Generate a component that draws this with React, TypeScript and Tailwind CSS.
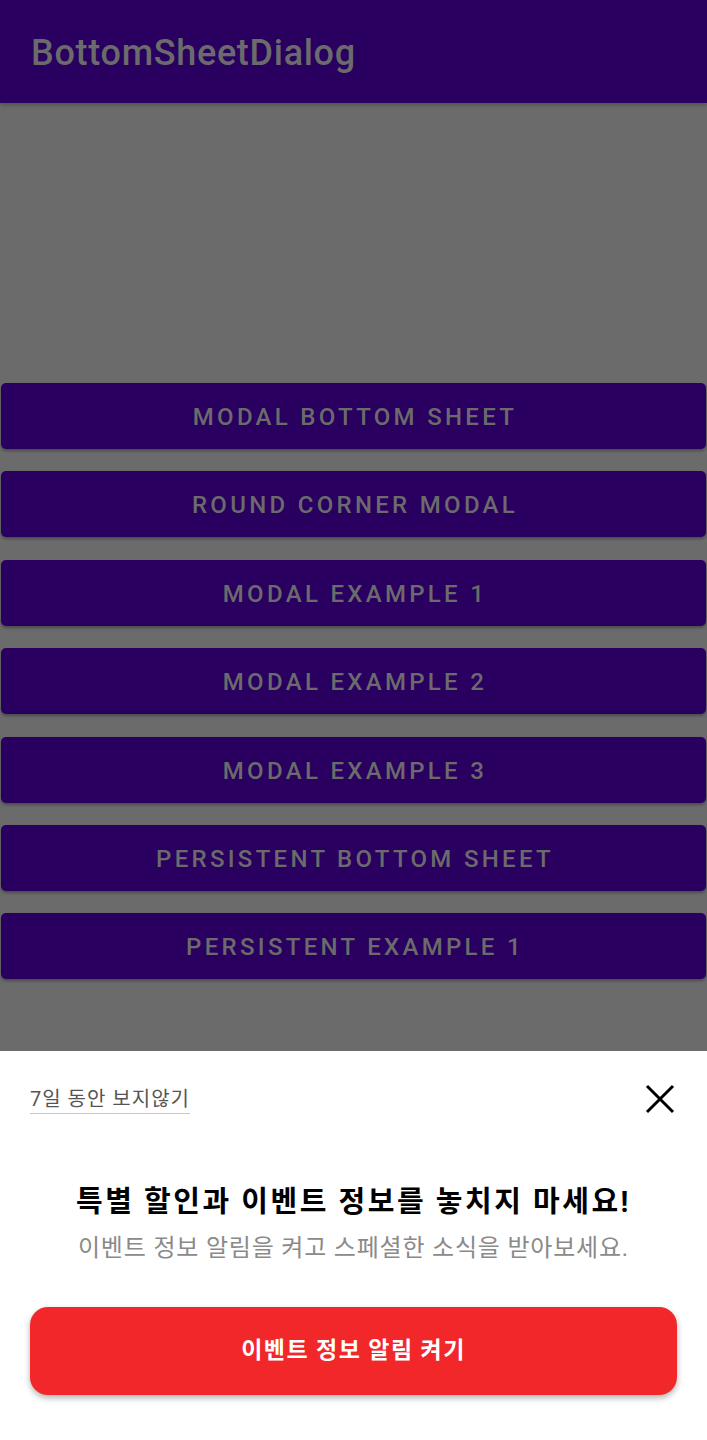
const buttons = [
  'MODAL BOTTOM SHEET',
  'ROUND CORNER MODAL',
  'MODAL EXAMPLE 1',
  'MODAL EXAMPLE 2',
  'MODAL EXAMPLE 3',
  'PERSISTENT BOTTOM SHEET',
  'PERSISTENT EXAMPLE 1',
]

const kr = "font-['Roboto','Noto_Sans_CJK_KR',sans-serif]"

export default function App() {
  return (
    <div className="flex h-[1440px] w-full flex-col overflow-hidden bg-[#6b6b6b] font-['Roboto',sans-serif]">
      <header className="flex h-[103px] shrink-0 items-center bg-[#290060] pl-[31px] pt-[2px] shadow-[0_2px_4px_rgba(0,0,0,0.25)]">
        <h1 className="text-[36px] font-medium tracking-[0.7px] text-[#6b6b6b]">BottomSheetDialog</h1>
      </header>

      <main className="flex flex-1 flex-col gap-[22.4px] pt-[280px]">
        {buttons.map((label) => (
          <button
            key={label}
            className="mx-px flex h-[66px] items-center justify-center rounded-[5px] bg-[#290060] pl-[3px] pt-[2px] text-[24px] font-medium tracking-[3.3px] text-[#6b6b6b] shadow-[0_2px_3px_rgba(0,0,0,0.3)]"
          >
            {label}
          </button>
        ))}
      </main>

      <section className={`flex h-[389px] shrink-0 flex-col bg-white px-[30px] ${kr}`}>
        <div className="mt-[31px] flex h-[34px] items-center justify-between">
          <span className="border-b border-[#c8c8c8] text-[20px] leading-[28px] tracking-[1px] text-[#555555]">7일 동안 보지않기</span>
          <svg width="30" height="30" viewBox="0 0 30 30" className="mr-[2px]">
            <path d="M2 2L28 28M28 2L2 28" stroke="#000" strokeWidth="3" />
          </svg>
        </div>

        <h2 className="mt-[68px] text-center text-[29px] font-bold leading-[36px] tracking-[2.5px] text-black">
          특별 할인과 이벤트 정보를 놓치지 마세요!
        </h2>
        <p className="mt-[12px] text-center text-[24px] leading-[32px] tracking-[0.8px] text-[#8a8a8a]">
          이벤트 정보 알림을 켜고 스페셜한 소식을 받아보세요.
        </p>

        <button className="mt-[43px] flex h-[88px] items-center justify-center rounded-[18px] bg-[#f1272a] text-[23px] font-bold tracking-[1.4px] text-white shadow-[0_3px_6px_rgba(0,0,0,0.3)]">
          이벤트 정보 알림 켜기
        </button>
      </section>
    </div>
  )
}
